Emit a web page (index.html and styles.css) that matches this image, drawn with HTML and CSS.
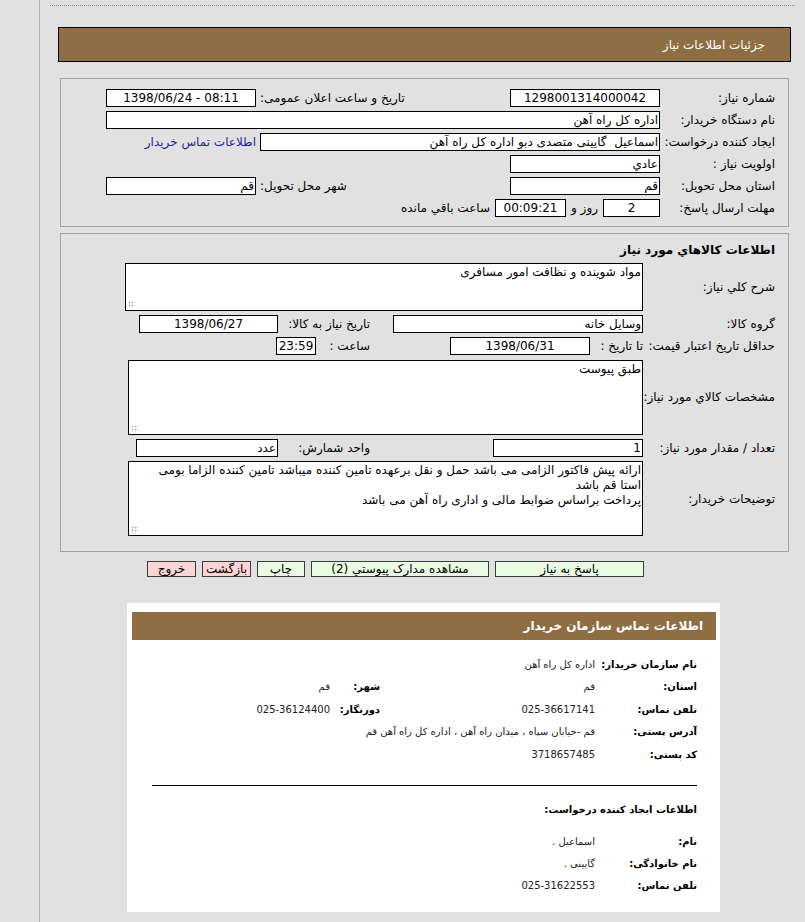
FILE: index.html
```html
<!DOCTYPE html>
<html lang="fa">
<head>
<meta charset="utf-8">
<title>جزئیات اطلاعات نیاز</title>
<link rel="stylesheet" href="styles.css">
</head>
<body>
<div class="layout">
  <div class="sidebar"></div>
  <main class="main">
    <div class="dots"></div>
    <div class="page-head">جزئیات اطلاعات نیاز</div>

    <div class="box box-main">
      <div class="lbl">شماره نیاز:</div>
      <div class="val"><span class="inp w150 c">1298001314000042</span></div>
      <div class="lbl2">تاریخ و ساعت اعلان عمومی:</div>
      <div class="val"><span class="inp w150 c ltr">1398/06/24 - 08:11</span></div>

      <div class="lbl">نام دستگاه خریدار:</div>
      <div class="val span3"><span class="inp full">اداره کل راه آهن</span></div>

      <div class="lbl">ایجاد کننده درخواست:</div>
      <div class="val span2"><span class="inp w400">اسماعیل&nbsp; گایینی متصدی دبو اداره کل راه آهن</span></div>
      <div class="val"><a class="link" href="#">اطلاعات تماس خریدار</a></div>

      <div class="lbl">اولویت نیاز :</div>
      <div class="val"><span class="inp w150">عادي</span></div>

      <div class="lbl">استان محل تحویل:</div>
      <div class="val"><span class="inp w150">قم</span></div>
      <div class="lbl2">شهر محل تحویل:</div>
      <div class="val"><span class="inp w150">قم</span></div>

      <div class="lbl">مهلت ارسال پاسخ:</div>
      <div class="val span2 deadline">
        <span class="inp w57 c">2</span>
        <span>روز و</span>
        <span class="inp w71 c">00:09:21</span>
        <span>ساعت باقي مانده</span>
      </div>
    </div>

    <div class="box box-items">
      <div class="title">اطلاعات کالاهاي مورد نیاز</div>

      <div class="lbl">شرح کلي نیاز:</div>
      <div class="ta ta-1">مواد شوینده و نظافت امور مسافری</div>

      <div class="lbl">گروه کالا:</div>
      <div class="val"><span class="inp full">وسایل خانه</span></div>
      <div class="sub">تاریخ نیاز به کالا:</div>
      <div class="val"><span class="inp w139 c">1398/06/27</span></div>

      <div class="lbl">حداقل تاریخ اعتبار قیمت:</div>
      <div class="val split split-date"><span>تا تاریخ :</span><span class="inp w140 c">1398/06/31</span></div>
      <div class="val split split-time"><span class="sub-t">ساعت :</span><span class="inp w40 c">23:59</span></div>
      <div></div>

      <div class="lbl">مشخصات کالاي مورد نیاز:</div>
      <div class="ta ta-2">طبق پیوست</div>

      <div class="lbl">تعداد / مقدار مورد نیاز:</div>
      <div class="val"><span class="inp w150">1</span></div>
      <div class="sub">واحد شمارش:</div>
      <div class="val"><span class="inp w142">عدد</span></div>

      <div class="lbl">توضیحات خریدار:</div>
      <div class="ta ta-3">ارائه پیش فاکتور الزامی می باشد حمل و نقل برعهده تامین کننده میباشد تامین کننده الزاما بومی<br>استا قم باشد<br>پرداخت براساس ضوابط مالی و اداری راه آهن می باشد</div>
    </div>

    <div class="actions">
      <button class="btn w149">پاسخ به نیاز</button>
      <button class="btn w178">مشاهده مدارک پیوستي (2)</button>
      <button class="btn w48">چاپ</button>
      <button class="btn btn-red w49">بازگشت</button>
      <button class="btn btn-red w49">خروج</button>
    </div>

    <section class="card">
      <div class="card-head">اطلاعات تماس سازمان خریدار</div>
      <div class="card-body">
        <div class="info">
          <div class="k">نام سازمان خریدار:</div>
          <div class="v span3">اداره کل راه آهن</div>
          <div class="k">استان:</div>
          <div class="v">قم</div>
          <div class="k k2">شهر:</div>
          <div class="v">قم</div>
          <div class="k">تلفن تماس:</div>
          <div class="v">025-36617141</div>
          <div class="k k2">دورنگار:</div>
          <div class="v">025-36124400</div>
          <div class="k">آدرس پستی:</div>
          <div class="v span3">قم -خیابان سپاه ، میدان راه آهن ، اداره کل راه آهن قم</div>
          <div class="k">کد پستی:</div>
          <div class="v span3">3718657485</div>
        </div>
        <div class="sep"></div>
        <div class="sub-head">اطلاعات ایجاد کننده درخواست:</div>
        <div class="info info-2">
          <div class="k">نام:</div>
          <div class="v span3">اسماعیل .</div>
          <div class="k">نام خانوادگی:</div>
          <div class="v span3">گایینی .</div>
          <div class="k">تلفن تماس:</div>
          <div class="v span3">025-31622553</div>
        </div>
      </div>
    </section>
  </main>
</div>
</body>
</html>
```

FILE: styles.css
```css
* { box-sizing: border-box; }
html, body { margin: 0; padding: 0; }
body {
  background: #e1e1e1;
  font-family: "DejaVu Sans", sans-serif;
  font-size: 12px;
  color: #000;
}
.layout { direction: ltr; display: flex; min-height: 100vh; }
.sidebar { width: 40px; flex: none; border-right: 1px solid #b4b4b4; }
.main { direction: rtl; flex: 1; min-width: 0; padding-bottom: 12px; }

.dots { margin: 5px 10px 0 10px; border-top: 1px dotted #8a8a8a; }

.page-head {
  margin: 21px 14px 0 18px;
  height: 35px;
  background: #8e6e42;
  border: 1px solid #000;
  color: #fff;
  padding-right: 25px;
  display: flex;
  align-items: center;
}

.box { margin: 16px 16px 0 20px; border: 1px solid #a4a4a4; }

.box-main {
  display: grid;
  grid-template-columns: 115px 250px 154px 150px;
  grid-auto-rows: 22px;
  align-items: center;
  padding: 8px 13px 7px 45px;
}
.lbl { grid-column: 1; white-space: nowrap; }
.lbl2 { text-align: left; padding-left: 4px; white-space: nowrap; }
.val { display: flex; align-items: center; min-width: 0; }
.span2 { grid-column: span 2; }
.span3 { grid-column: span 3; }

.inp {
  display: block;
  height: 18px;
  border: 1px solid #000;
  background: #fff;
  line-height: 16px;
  padding: 0 1px;
  white-space: nowrap;
  overflow: hidden;
}
.inp.c { text-align: center; }
.ltr { direction: ltr; unicode-bidi: isolate; }
.full { width: 100%; }
.w40 { width: 40px; }
.w57 { width: 57px; }
.w71 { width: 71px; }
.w139 { width: 139px; }
.w140 { width: 140px; }
.w142 { width: 142px; }
.w150 { width: 150px; }
.w400 { width: 400px; }

.link { color: #2323a6; text-decoration: none; white-space: nowrap; }
.deadline { gap: 5px; white-space: nowrap; }

.box-items {
  margin-top: 6px;
  display: grid;
  grid-template-columns: 132px 250px 115px 153px;
  row-gap: 4px;
  align-items: center;
  padding: 7px 13px 15px 64px;
}
.title { grid-column: 1 / -1; font-weight: bold; line-height: 18px; }
.sub { padding-right: 23px; white-space: nowrap; }
.split { justify-content: space-between; white-space: nowrap; }
.split-date { padding-left: 57px; }
.split-time { margin-left: -2px; }
.sub-t { padding-right: 23px; }

.ta {
  grid-column: span 3;
  position: relative;
  background: #fff;
  border: 1px solid #000;
  padding: 0 1px;
  line-height: 15px;
  white-space: nowrap;
  overflow: hidden;
}
.ta::after {
  content: "";
  position: absolute;
  left: 2px;
  bottom: 2px;
  width: 7px;
  height: 7px;
  background-image: radial-gradient(circle, #b9b9b9 0.9px, transparent 1.1px);
  background-size: 3px 3px;
}
.ta-1 { height: 48px; padding-top: 1px; }
.ta-2 { height: 75px; margin-left: 3px; margin-top: 1px; padding-top: 1px; }
.ta-3 { height: 75px; margin-left: 3px; padding-top: 1px; }

.actions {
  display: flex;
  gap: 6px;
  margin-top: 9px;
  padding-right: 161px;
}
.btn {
  height: 16px;
  padding: 0;
  border: 1px solid #3c3c3c;
  background: #eafbe4;
  font-family: "DejaVu Sans", sans-serif;
  font-size: 12px;
  line-height: 14px;
  color: #000;
  text-align: center;
}
.btn-red { background: #fbd4d4; }
.w149 { width: 149px; }
.w178 { width: 178px; }
.w48 { width: 48px; }
.w49 { width: 49px; }

.card {
  margin: 26px 85px 0 87px;
  background: #fff;
  padding: 9px 4px 15px 5px;
}
.card-head {
  height: 28px;
  background: #8e6e42;
  color: #fff;
  font-weight: bold;
  padding-right: 13px;
  display: flex;
  align-items: center;
}
.card-body { padding: 13px 19px 0 20px; font-size: 10px; }
.info {
  display: grid;
  grid-template-columns: 100px 217px 48px 1fr;
  grid-auto-rows: 22.5px;
  align-items: center;
}
.info-2 { grid-auto-rows: 22px; margin-top: 12px; }
.k { grid-column: 1; font-weight: bold; white-space: nowrap; }
.k.k2 { grid-column: auto; }
.v { padding-right: 2px; color: #222; white-space: nowrap; }
.sep { border-top: 1px solid #000; margin-top: 19px; }
.sub-head { font-weight: bold; line-height: 18px; margin-top: 15px; }
```
